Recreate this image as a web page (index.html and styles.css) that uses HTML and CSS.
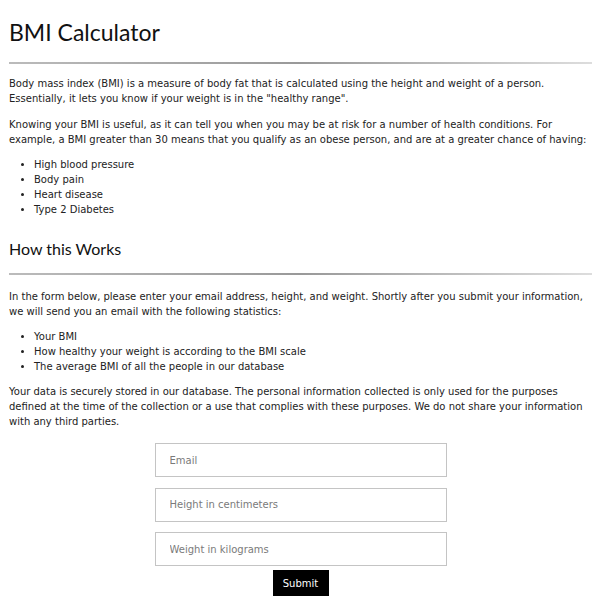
FILE: index.html
```html
<!DOCTYPE html>
<html lang="en">
<head>
<meta charset="utf-8">
<title>BMI Calculator</title>
<link rel="stylesheet" href="styles.css">
</head>
<body>
<main class="page">
  <h1 class="title">BMI Calculator</h1>
  <hr class="rule">
  <p class="text text-first">Body mass index (BMI) is a measure of body fat that is calculated using the height and weight of a person. Essentially, it lets you know if your weight is in the "healthy range".</p>
  <p class="text">Knowing your BMI is useful, as it can tell you when you may be at risk for a number of health conditions. For example, a BMI greater than 30 means that you qualify as an obese person, and are at a greater chance of having:</p>
  <ul class="list">
    <li>High blood pressure</li>
    <li>Body pain</li>
    <li>Heart disease</li>
    <li>Type 2 Diabetes</li>
  </ul>
  <h2 class="subtitle">How this Works</h2>
  <hr class="rule rule-sub">
  <p class="text text-after-sub">In the form below, please enter your email address, height, and weight. Shortly after you submit your information, we will send you an email with the following statistics:</p>
  <ul class="list">
    <li>Your BMI</li>
    <li>How healthy your weight is according to the BMI scale</li>
    <li>The average BMI of all the people in our database</li>
  </ul>
  <p class="text text-last">Your data is securely stored in our database. The personal information collected is only used for the purposes defined at the time of the collection or a use that complies with these purposes. We do not share your information with any third parties.</p>
  <form class="form">
    <input class="field" type="email" placeholder="Email">
    <input class="field" type="text" placeholder="Height in centimeters">
    <input class="field" type="text" placeholder="Weight in kilograms">
    <button class="submit" type="button">Submit</button>
  </form>
</main>
</body>
</html>
```
FILE: styles.css
```css
* { box-sizing: border-box; }
html, body { margin: 0; padding: 0; background: #fff; }
body {
  font-family: "DejaVu Sans", Verdana, sans-serif;
  font-size: 10px;
  line-height: 15px;
  color: #222;
}
.page { padding: 0 8px 0 9px; }
.title {
  font-family: Lato, "Open Sans", sans-serif;
  font-weight: 400;
  font-size: 23px;
  line-height: 32px;
  margin: 0;
  padding-top: 16px;
  color: #111;
}
.rule {
  border: 0;
  height: 2px;
  margin: 14px 0 0 0;
  background: linear-gradient(to right, #bbb 0%, #999 50%, #ddd 100%);
}
.text { margin: 11px 0 0 0; }
.text-first { margin-top: 12px; }
.text-after-sub { margin-top: 14px; }
.text-last { margin-top: 10px; }
.list { margin: 10px 0 0 0; padding-left: 25px; }
.subtitle {
  font-family: Lato, "Open Sans", sans-serif;
  font-weight: 400;
  font-size: 16px;
  line-height: 24px;
  margin: 20px 0 0 0;
  color: #111;
}
.rule-sub { margin-top: 12px; }
.form {
  display: flex;
  flex-direction: column;
  align-items: center;
  gap: 10.5px;
  margin-top: 14px;
}
.field {
  width: 292px;
  height: 34px;
  border: 1px solid #c4c4c4;
  padding: 0 14px;
  font-family: "DejaVu Sans", Verdana, sans-serif;
  font-size: 10px;
  color: #222;
  outline: none;
}
.field::placeholder { color: #7a7a7a; }
.submit {
  margin-top: -6.5px;
  width: 56px;
  height: 26px;
  background: #000;
  color: #fff;
  border: 0;
  font-family: "DejaVu Sans", Verdana, sans-serif;
  font-size: 10px;
  padding: 0;
}
```
